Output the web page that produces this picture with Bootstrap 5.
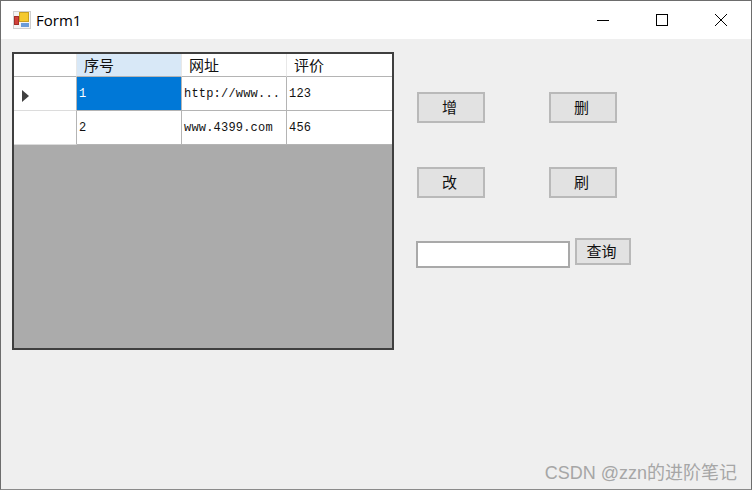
<!DOCTYPE html>
<html lang="en">
<head>
<meta charset="UTF-8">
<title>Form1</title>
<link href="https://cdn.jsdelivr.net/npm/bootstrap@5.3.0/dist/css/bootstrap.min.css" rel="stylesheet">
<style>
    html, body { height: 100%; margin: 0; background: #efefef; overflow: hidden; }
    .win { height: 490px; width: 752px; border: 1px solid #6d6d6d; border-bottom-color: #8a8a8a; background: #efefef; position: relative; font-family: "Noto Sans CJK SC", "Liberation Sans", sans-serif; color: #111; }
    .win-title { height: 38px; background: #fff; padding-left: 12px; }
    .win-title .cap { font-family: "Open Sans", "Liberation Sans", sans-serif; font-size: 15px; margin-left: 5px; color: #000; line-height: 1; }
    .win-ctls { margin-right: 1px; }
    .win-ctl { width: 59px; height: 38px; }
    .win-body { padding: 13px 0 0 11px; }

    .grid-box { width: 382px; height: 298px; border: 2px solid #3f3f3f; background: #ababab; flex: none; }
    .dgv { border-collapse: separate; border-spacing: 0; table-layout: fixed; width: 378px; }
    .dgv th, .dgv td { padding: 0; background: #fff; vertical-align: middle; font-weight: 400; }
    .dgv thead th { height: 23px; font-size: 15px; line-height: 1; padding: 0 0 2px 7px; border-bottom: 1px solid #b4b4b4; border-right: 1px solid #e8e8e8; }
    .dgv thead th.sel { background: #d8e8f7; }
    .dgv tbody td { height: 34px; font-size: 12px; letter-spacing: .2px; font-family: "Liberation Mono", monospace; padding: 1px 0 0 2px; border-right: 1px solid #b4b4b4; border-bottom: 1px solid #b4b4b4; white-space: nowrap; overflow: hidden; }
    .dgv tbody td.rowh { border-bottom-color: #dcdcdc; padding-left: 8px; }
    .dgv tbody td.rowh svg { margin-top: 4px; }
    .dgv tbody td.cur { background: #0078d7; color: #fff; }
    .dgv .col-h { width: 63px; }
    .dgv .col-a, .dgv .col-b { width: 105px; }
    .dgv tr > :last-child { border-right: 0; }

    .side { padding: 40px 0 0 23px; }
    .side-row { display: flex; }
    .side-row + .side-row { margin-top: 44px; }
    .side-row.side-last { margin-top: 40px; margin-left: -1px; }
    .wbtn { width: 68px; height: 31px; padding: 0 3px 2px 0; border: 2px solid #b9b9b9; border-radius: 0; background: #e2e2e2; color: #111; font-size: 15px; line-height: 1; }
    .wbtn:hover { background: #e2e2e2; border-color: #b9b9b9; color: #111; }
    .wbtn-b { margin-left: 64px; }
    .wbtn-q { width: 56px; height: 27px; font-size: 15px; margin-left: 5px; }
    .wtxt { width: 154px; height: 27px; margin-top: 3px; padding: 0 3px; border: 2px solid #a9a9a9; border-radius: 0; background: #fff; }
    .mark-text { position: absolute; right: 14px; bottom: 4px; font-family: "Liberation Sans", "Noto Sans CJK SC", sans-serif; font-size: 18px; color: #a6a6a6; line-height: 24px; }
</style>
</head>
<body>

<div class="win">
    <div class="win-title d-flex align-items-center">
        <svg width="18" height="18" viewBox="0 0 18 18">
            <rect x="0" y="0" width="18" height="18" fill="#cfcfcf"/>
            <rect x="1" y="1" width="16" height="16" fill="#f4f4f4"/>
            <rect x="6.5" y="1.5" width="9" height="9" fill="#f5c92e" stroke="#c9a020"/>
            <rect x="1.5" y="5.5" width="4" height="8" fill="#d2403a" stroke="#a33029"/>
            <rect x="8" y="12" width="8" height="4" fill="#6a9bd8"/>
        </svg>
        <span class="cap">Form1</span>
        <div class="win-ctls ms-auto d-flex">
            <div class="win-ctl d-flex align-items-center justify-content-center">
                <svg width="12" height="12" viewBox="0 0 12 12"><path d="M0 6.5H12" stroke="#000" fill="none"/></svg>
            </div>
            <div class="win-ctl d-flex align-items-center justify-content-center">
                <svg width="12" height="12" viewBox="0 0 12 12"><rect x="0.5" y="0.5" width="11" height="11" stroke="#000" fill="none"/></svg>
            </div>
            <div class="win-ctl d-flex align-items-center justify-content-center">
                <svg width="12" height="12" viewBox="0 0 12 12"><path d="M0 0L12 12M12 0L0 12" stroke="#000" fill="none"/></svg>
            </div>
        </div>
    </div>

    <div class="win-body d-flex">
        <div class="grid-box">
            <table class="dgv">
                <colgroup><col class="col-h"><col class="col-a"><col class="col-b"><col></colgroup>
                <thead>
                    <tr><th></th><th class="sel">序号</th><th>网址</th><th>评价</th></tr>
                </thead>
                <tbody>
                    <tr>
                        <td class="rowh"><svg width="7" height="12" viewBox="0 0 7 12" class="d-block"><path d="M0 0L7 6L0 12Z" fill="#404040"/></svg></td>
                        <td class="cur">1</td><td>http://www...</td><td>123</td>
                    </tr>
                    <tr>
                        <td class="rowh"></td>
                        <td>2</td><td>www.4399.com</td><td>456</td>
                    </tr>
                </tbody>
            </table>
        </div>

        <div class="side">
            <div class="side-row">
                <button class="btn wbtn" type="button">增</button>
                <button class="btn wbtn wbtn-b" type="button">删</button>
            </div>
            <div class="side-row">
                <button class="btn wbtn" type="button">改</button>
                <button class="btn wbtn wbtn-b" type="button">刷</button>
            </div>
            <div class="side-row side-last">
                <input class="form-control wtxt" type="text">
                <button class="btn wbtn wbtn-q" type="button">查询</button>
            </div>
        </div>
    </div>

    <div class="mark-text">CSDN @zzn的进阶笔记</div>
</div>

<script src="https://cdn.jsdelivr.net/npm/bootstrap@5.3.0/dist/js/bootstrap.bundle.min.js"></script>
</body>
</html>
